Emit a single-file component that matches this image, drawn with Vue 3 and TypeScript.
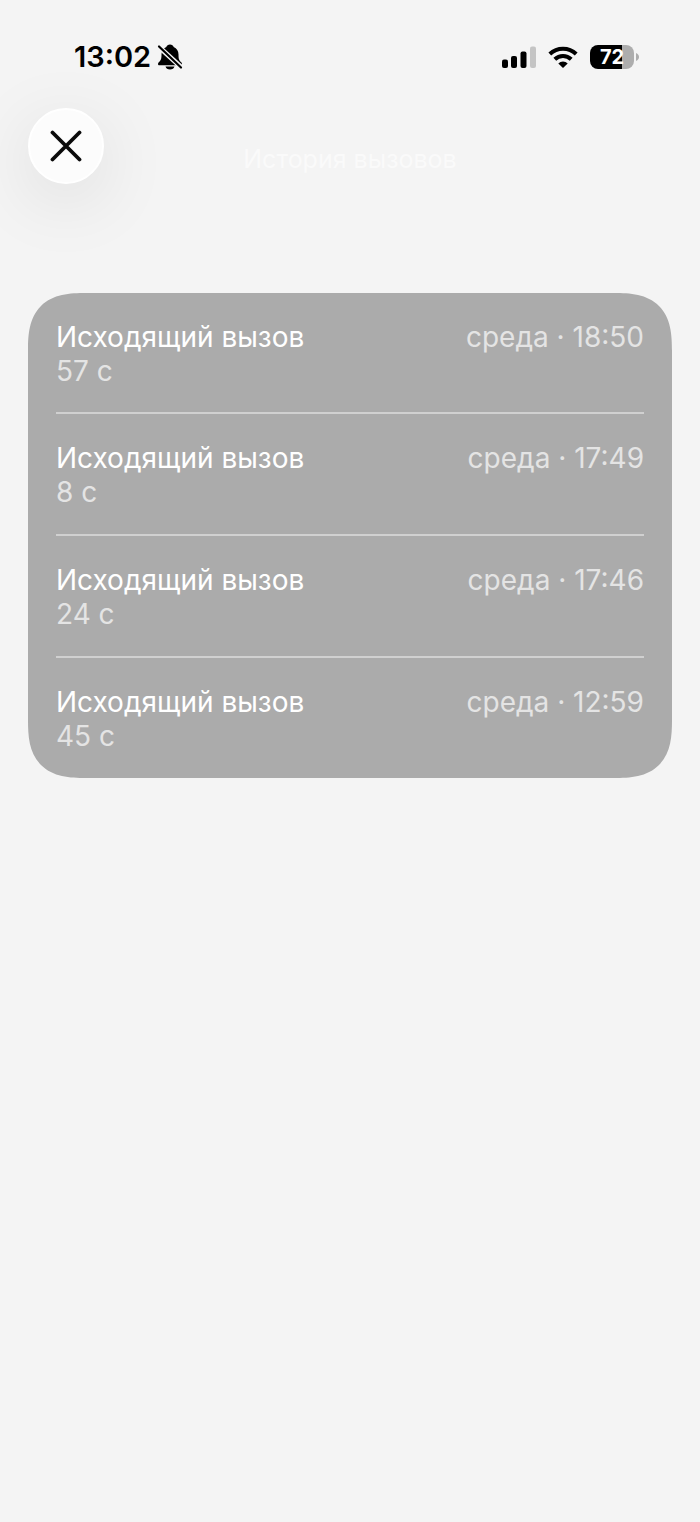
<script setup lang="ts">
interface Call {
  id: number
  title: string
  duration: string
  day: string
  time: string
}

const calls: Call[] = [
  { id: 1, title: 'Исходящий вызов', duration: '57 с', day: 'среда', time: '18:50' },
  { id: 2, title: 'Исходящий вызов', duration: '8 с', day: 'среда', time: '17:49' },
  { id: 3, title: 'Исходящий вызов', duration: '24 с', day: 'среда', time: '17:46' },
  { id: 4, title: 'Исходящий вызов', duration: '45 с', day: 'среда', time: '12:59' },
]
</script>

<template>
  <div class="screen">
    <div class="status">
      <div class="clock">
        <span>13:02</span>
        <svg class="bell" width="26" height="26" viewBox="0 0 26 26" aria-hidden="true">
          <path d="M13 0.500c-1.900 0-3.200 1.100-3.700 2.600C6.200 4.400 4.500 7 4.500 10.500c0 4.500-.6 5.700-2.500 7.600-.7.700-1 1.200-1 1.800 0 .8.500 1.300 1.400 1.300h21.200c.9 0 1.400-.5 1.400-1.300 0-.6-.3-1.100-1-1.800-1.900-1.900-2.500-3.100-2.500-7.600 0-3.500-1.700-6.100-4.800-7.400C16.200 1.600 14.900.5 13 .5z" />
          <path d="M8.500 22.500h9c-.5 2-2.200 3-4.500 3s-4-1-4.500-3z" />
          <path d="M1.500 2.500 24.500 23.500" stroke="#f4f4f4" stroke-width="5" />
          <path d="M2 2.500 24 23.500" stroke="#000" stroke-width="2.200" stroke-linecap="round" />
        </svg>
      </div>
      <div class="indicators">
        <svg width="34" height="24" viewBox="0 0 34 24" aria-hidden="true">
          <rect x="0" y="14.500" width="6" height="8.500" rx="2" />
          <rect x="9" y="11" width="6" height="12" rx="2" />
          <rect x="18.500" y="6.500" width="6" height="16.500" rx="2" />
          <rect x="28" y="1.500" width="6" height="21.500" rx="2" fill="#c4c4c4" />
        </svg>
        <svg width="30" height="24" viewBox="0 0 30 24" aria-hidden="true">
          <g fill="none" stroke="#000" stroke-width="4">
            <path d="M1.800 9a19 19 0 0 1 26.400 0" />
            <path d="M6.800 14.200a11.800 11.800 0 0 1 16.400 0" />
          </g>
          <path d="M15 23l-4.700-4.600a6.700 6.700 0 0 1 9.400 0z" />
        </svg>
        <div class="battery">
          <span class="level">72</span>
          <svg class="cap" width="3" height="8" viewBox="0 0 3 8" aria-hidden="true">
            <path d="M0 0c4 1.500 4 6.500 0 8z" fill="#adadad" />
          </svg>
        </div>
      </div>
    </div>

    <header class="header">
      <button class="close" type="button" aria-label="Закрыть">
        <svg width="32" height="32" viewBox="0 0 32 32" aria-hidden="true">
          <path d="M2.500 2.500l27 27M29.500 2.500l-27 27" fill="none" stroke="#0a0a0a" stroke-width="3.800" stroke-linecap="round" />
        </svg>
      </button>
      <h1 class="title">История вызовов</h1>
    </header>

    <ul class="card">
      <li v-for="call in calls" :key="call.id" class="row">
        <div class="info">
          <span class="name">{{ call.title }}</span>
          <span>{{ call.duration }}</span>
        </div>
        <span>{{ call.day }} · {{ call.time }}</span>
      </li>
    </ul>
  </div>
</template>

<style>
body {
  margin: 0;
  background: #f4f4f4;
}
</style>

<style scoped>
.screen {
  box-sizing: border-box;
  min-height: 100vh;
  padding: 40px 28px;
  background: #f4f4f4;
  color: #000;
  font-family: Inter, "Liberation Sans", sans-serif;
}

.status {
  display: flex;
  justify-content: space-between;
  align-items: center;
  height: 34px;
  padding: 0 33px 0 46px;
}

.clock {
  display: flex;
  align-items: center;
  gap: 6px;
  font-size: 29px;
  font-weight: 600;
  line-height: 34px;
}

.indicators {
  display: flex;
  align-items: center;
  gap: 12px;
}

.battery {
  display: flex;
  align-items: center;
  gap: 2px;
}

.level {
  width: 44px;
  height: 24px;
  border-radius: 8px;
  background: linear-gradient(to right, #000 72%, #adadad 72%);
  color: #fff;
  font-size: 20px;
  font-weight: 700;
  line-height: 24px;
  text-align: center;
}

.header {
  display: grid;
  grid-template-columns: 76px 1fr 76px;
  align-items: center;
  margin-top: 34px;
}

.close {
  display: flex;
  align-items: center;
  justify-content: center;
  width: 76px;
  height: 76px;
  padding: 0;
  border: 2px solid #fff;
  border-radius: 50%;
  background: #fcfcfc;
  box-shadow: 0 16px 72px rgba(0, 0, 0, 0.1);
}

.title {
  margin: 26px 0 0;
  color: #fafafa;
  font-size: 25px;
  font-weight: 400;
  line-height: 30px;
  text-align: center;
}

.card {
  margin: 109px 0 0;
  padding: 0 28px;
  border-radius: 44px;
  background: #ababab;
  list-style: none;
}

@supports (corner-shape: superellipse(1.45)) {
  .card {
    border-radius: 58px;
    corner-shape: superellipse(1.45);
  }
}

.row {
  display: flex;
  justify-content: space-between;
  box-sizing: border-box;
  min-height: 119px;
  padding-top: 27px;
  color: #e4e4e4;
  font-size: 28px;
  line-height: 34px;
}

.row + .row {
  min-height: 122px;
  border-top: 2px solid #d0d0d0;
}

.info {
  display: flex;
  flex-direction: column;
}

.name {
  color: #fff;
}
</style>
